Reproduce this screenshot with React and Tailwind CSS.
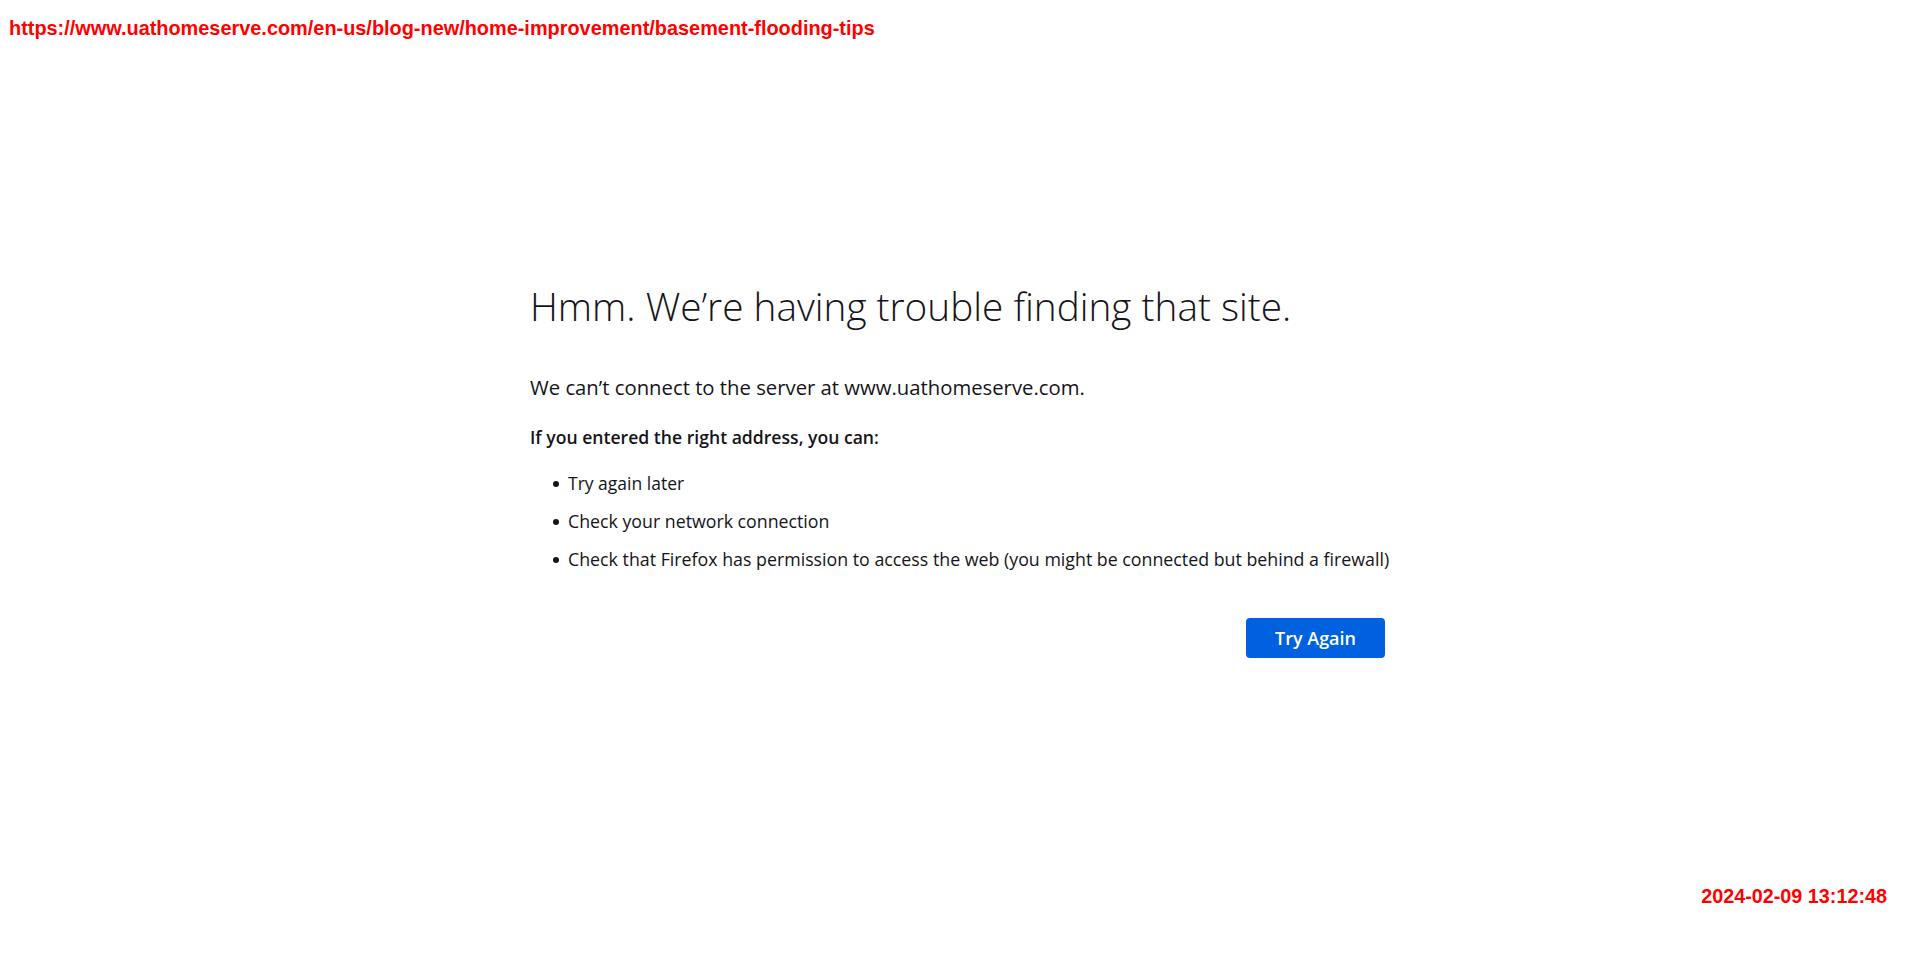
import React from "react";

const items = [
  ["Try again later", "text-[17.5px]"],
  ["Check your network connection", "text-[17.75px]"],
  ["Check that Firefox has permission to access the web (you might be connected but behind a firewall)", "text-[17.8px]"],
];

export default function App() {
  return (
    <div className="flex h-[963px] flex-col bg-white pt-[16px] pb-[55px] text-[#15141a]">
      <div className="pl-[9px] font-['Liberation_Sans',Arial,sans-serif] text-[19.9px] leading-[24px] font-bold whitespace-nowrap text-[#ff0000]">
        https://www.uathomeserve.com/en-us/blog-new/home-improvement/basement-flooding-tips
      </div>

      <main className="mx-auto mt-[240px] flex w-[860px] flex-col font-['Open_Sans','Noto_Sans',sans-serif]">
        <h1 className="text-[38.75px] leading-[52px] font-light whitespace-nowrap">
          Hmm. We’re having trouble finding that site.
        </h1>
        <p className="mt-[41px] text-[20.3px] leading-[28px] whitespace-nowrap">
          We can’t connect to the server at www.uathomeserve.com.
        </p>
        <p className="mt-[24px] text-[17.6px] leading-[24px] font-semibold whitespace-nowrap">
          If you entered the right address, you can:
        </p>
        <ul className="mt-[22px] flex flex-col gap-[14px]">
          {items.map(([t, size]) => (
            <li key={t} className="flex items-start">
              <span className="mt-[10px] ml-[23px] h-[6px] w-[6px] shrink-0 rounded-full bg-[#15141a]" />
              <span className={`ml-[9px] leading-[24px] whitespace-nowrap ${size}`}>{t}</span>
            </li>
          ))}
        </ul>
        <div className="mt-[47px] flex justify-end pr-[5px]">
          <button className="flex h-[40px] w-[139px] items-center justify-center rounded-[4px] bg-[#0061e0] text-[18px] leading-[24px] font-semibold text-white">
            Try Again
          </button>
        </div>
      </main>

      <div className="mt-auto flex justify-end pr-[33px] font-['Liberation_Sans',Arial,sans-serif] text-[19.8px] leading-[24px] font-bold text-[#ff0000]">
        2024-02-09 13:12:48
      </div>
    </div>
  );
}
